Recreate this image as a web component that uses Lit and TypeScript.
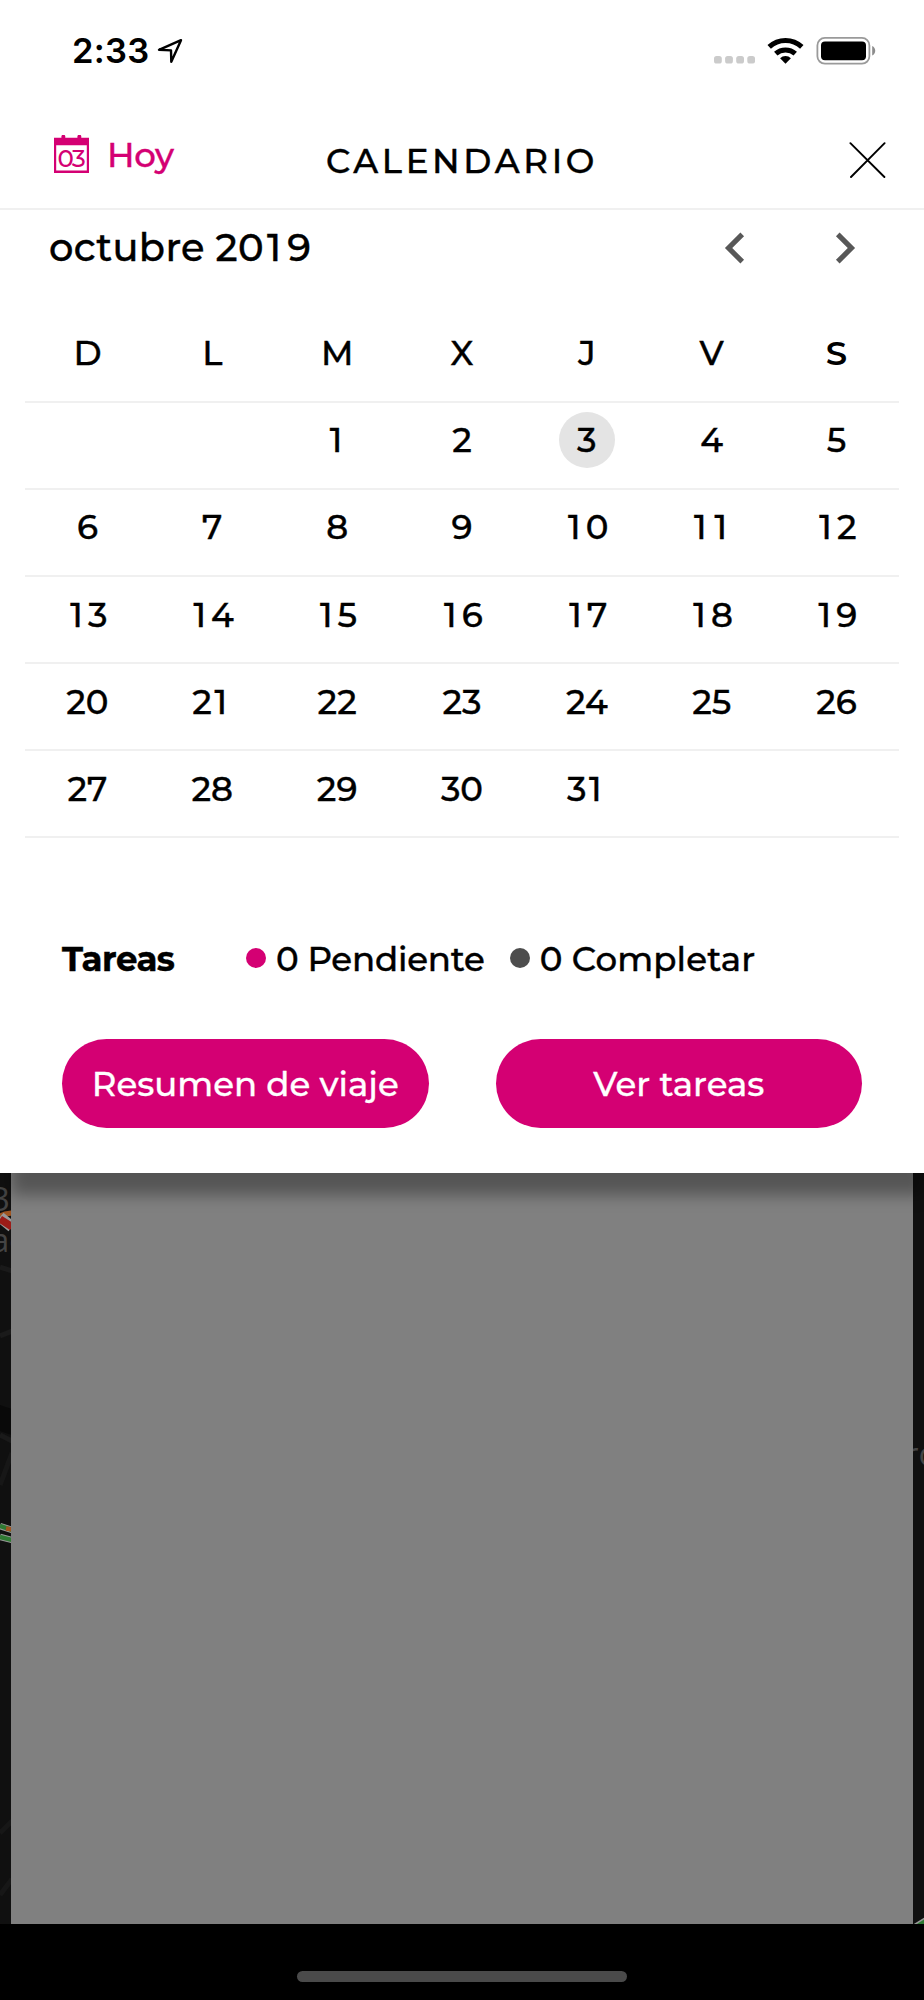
import { LitElement, html, svg, css } from "lit";
import { customElement, property } from "lit/decorators.js";
import { classMap } from "lit/directives/class-map.js";

// The figure 1 is narrow in the proportional set, so it gets side bearings of its own.
const figures = (text: string) => Array.from(text).map((c) => (c === "1" ? html`<span class="one">1</span>` : c));

@customElement("status-bar")
class StatusBar extends LitElement {
  static styles = css`
    :host {
      display: flex;
      align-items: center;
      justify-content: space-between;
      height: 101px;
      padding: 0 48px 0 72px;
      font: 600 34.5px/40px Inter, "Liberation Sans", sans-serif;
      color: #000;
    }
    .side { display: flex; align-items: center; }
    .time { letter-spacing: 0.3px; }
    .arrow { margin-left: 7px; }
    .signal { margin: 18px 12px 0 0; }
    .wifi { margin-right: 12px; }
    svg { display: block; }
  `;
  render() {
    return html`
      <div class="side">
        <span class="time">2:33</span>
        <svg class="arrow" width="26" height="26" viewBox="0 0 26 26" fill="none" stroke="#000" stroke-width="2.4" stroke-linejoin="round">
          <path d="M24 2.2 2 11.8l12 .6.3 11.4z" />
        </svg>
      </div>
      <div class="side">
        <svg class="signal" width="41" height="8" viewBox="0 0 41 8" fill="#cbcbcb">
          ${[0, 11.1, 22.2, 33.3].map((x) => svg`<rect x=${x} y="0" width="7.8" height="7.6" rx="2.6" />`)}
        </svg>
        <svg class="wifi" width="37" height="27" viewBox="0 0 37 27">
          <path d="M18.5 26.8 13.1 21.3a7.7 7.7 0 0 1 10.8 0z" />
          <path d="M8.75 16.7a14.5 14.5 0 0 1 19.5 0" fill="none" stroke="#000" stroke-width="5" />
          <path d="M2.2 9.9a23.8 23.8 0 0 1 32.6 0" fill="none" stroke="#000" stroke-width="5" />
        </svg>
        <svg width="60" height="28" viewBox="0 0 60 28">
          <rect x="1.4" y="0.9" width="52" height="25.8" rx="7.5" fill="none" stroke="#9a9a9a" stroke-width="1.8" />
          <rect x="5" y="4.4" width="45" height="18.8" rx="4" />
          <path d="M56.2 9.1c4 1.6 4 7.8 0 9.4z" fill="#8c8c8c" />
        </svg>
      </div>
    `;
  }
}

@customElement("title-bar")
class TitleBar extends LitElement {
  static styles = css`
    :host {
      display: grid;
      grid-template-columns: 272px 1fr 272px;
      align-items: center;
      height: 107px;
      border-bottom: 2px solid #f0f0f0;
      font-size: 34px;
      line-height: 42px;
      font-weight: 500;
    }
    .today { display: flex; align-items: center; padding-left: 53px; color: #d40073; }
    .today span { margin-left: 17px; letter-spacing: -0.3px; }
    .icon-text { font-size: 24.5px; font-weight: 500; letter-spacing: -1.9px; stroke: none; }
    .title { padding: 13px 0 0; text-align: center; letter-spacing: 3.65px; white-space: nowrap; }
    .close { justify-self: end; margin: 12px 38px 0 0; }
    svg { display: block; }
  `;
  render() {
    return html`
      <div class="today">
        <svg width="37" height="39" viewBox="0 0 37 39" fill="currentColor">
          <path d="M1 2.8H8.4V1.6a1.6 1.6 0 0 1 3.9 0V2.8H24.4V1.6a1.6 1.6 0 0 1 3.9 0V2.8H36V38H1zM3.2 10.3V35.5H33.8V10.3z" fill-rule="evenodd" />
          <text class="icon-text" x="17.6" y="32" text-anchor="middle">03</text>
        </svg>
        <span>Hoy</span>
      </div>
      <div class="title">CALENDARIO</div>
      <svg class="close" width="37" height="37" viewBox="0 0 37 37" fill="none" stroke="#000" stroke-width="1.9" stroke-linecap="round">
        <path d="M1.4 1.2 35.4 35M35.6 1.2 2 35" />
      </svg>
    `;
  }
}

@customElement("month-grid")
class MonthGrid extends LitElement {
  static styles = css`
    :host { display: block; }
    .head {
      display: flex;
      align-items: center;
      height: 75px;
      padding: 0 48px 0 49px;
      font-size: 38.4px;
      font-weight: 500;
      letter-spacing: 0.35px;
    }
    .month { flex: 1; }
    .next { margin-left: 48px; }
    .week {
      display: grid;
      grid-template-columns: repeat(7, 1fr);
      align-items: center;
      justify-items: center;
      box-sizing: border-box;
      height: 87.1px;
      margin: 0 25px;
      padding-bottom: 10px;
      border-bottom: 2px solid #f0f0f0;
      font-size: 34px;
      font-weight: 500;
    }
    .names { height: 117.8px; padding: 20px 0 0; }
    .one { padding: 0 0.15em 0 0.08em; }
    .day {
      display: flex;
      align-items: center;
      justify-content: center;
      width: 56px;
      height: 56px;
      border-radius: 50%;
    }
    .today { background: #e4e4e4; }
    .strong { font-weight: 600; -webkit-text-stroke: 0; }
    svg { display: block; }
  `;
  @property({ type: Number }) offset = 2;
  @property({ type: Number }) days = 31;
  @property({ type: Number }) today = 3;

  render() {
    const weeks = Array.from({ length: 5 }, (_, w) =>
      Array.from({ length: 7 }, (_, d) => w * 7 + d + 1 - this.offset));
    return html`
      <div class="head">
        <span class="month">${figures("octubre 2019")}</span>
        <svg width="62" height="62" viewBox="0 0 24 24" fill="#585858"><path d="M15.5 7.41 14.1 6l-6 6 6 6 1.4-1.41L10.93 12z" /></svg>
        <svg class="next" width="62" height="62" viewBox="0 0 24 24" fill="#585858"><path d="M8.5 7.41 9.9 6l6 6-6 6-1.4-1.41L13.07 12z" /></svg>
      </div>
      <div class="week names">
        ${["D", "L", "M", "X", "J", "V", "S"].map((n) => html`<span class=${classMap({ strong: n === "S" })}>${n}</span>`)}
      </div>
      ${weeks.map((week) => html`
        <div class="week">
          ${week.map((n) => html`<span class=${classMap({ day: true, today: n === this.today })}>${n > 0 && n <= this.days ? figures(String(n)) : ""}</span>`)}
        </div>`)}
    `;
  }
}

@customElement("task-summary")
class TaskSummary extends LitElement {
  static styles = css`
    :host { display: block; padding: 0 62px 44px; font-size: 34px; line-height: 42px; font-weight: 500; }
    .tasks { display: flex; align-items: center; height: 42px; margin: 100px 0 59px; letter-spacing: -0.2px; }
    .label { width: 184px; font-weight: 700; letter-spacing: -0.5px; }
    .dot { width: 20px; height: 20px; margin: 0 10px 3px 0; border-radius: 50%; background: #d40073; }
    .done { margin-left: 25px; background: #4d4d4d; }
    .completed { letter-spacing: 0.15px; }
    .actions { display: grid; grid-template-columns: 1fr 1fr; gap: 67px; }
    button {
      height: 89px;
      padding: 1px 0 0;
      border: 0;
      border-radius: 45px;
      background: #d40073;
      color: #fff;
      font: inherit;
      -webkit-text-stroke: 0.3px #fff;
    }
  `;
  render() {
    return html`
      <div class="tasks">
        <span class="label">Tareas</span>
        <i class="dot"></i><span>0 Pendiente</span>
        <i class="dot done"></i><span class="completed">0 Completar</span>
      </div>
      <div class="actions">
        <button>Resumen de viaje</button>
        <button>Ver tareas</button>
      </div>
    `;
  }
}

@customElement("app-root")
class AppRoot extends LitElement {
  static styles = css`
    :host {
      display: flex;
      flex-direction: column;
      height: 2000px;
      overflow: hidden;
      background: #000;
      color: #000;
      font-family: Montserrat, Inter, "Liberation Sans", sans-serif;
      font-weight: 500;
    }
    .panel {
      position: relative;
      z-index: 1;
      height: 1172.5px;
      background: #fff;
      box-shadow: 6px 27px 15px -5px rgba(0, 0, 0, 0.34);
      -webkit-text-stroke: 0.4px currentColor;
    }
    status-bar { -webkit-text-stroke: 0; }
    .backdrop { display: grid; grid-template-columns: 11px 1fr 11px; height: 751.5px; background: #101010; }
    .sheet { background: #808080; }
    .map { display: block; width: 100%; height: 751.5px; overflow: hidden; }
    .label { font: 33px "Open Sans", sans-serif; fill: #444; }
    .home { width: 330px; height: 11px; margin: 47px auto 0; border-radius: 6px; background: #4a4a4a; }
  `;
  render() {
    return html`
      <div class="panel">
        <status-bar></status-bar>
        <title-bar></title-bar>
        <month-grid></month-grid>
        <task-summary></task-summary>
      </div>
      <div class="backdrop">
        <svg class="map">
          <path d="M0 94 12 98M0 163 12 158M0 262 12 268" stroke="#1a1a1a" stroke-width="5" />
          <path d="M0 312 12 280M0 660 12 648M0 722 12 706" stroke="#171717" stroke-width="5" />
          <path d="M0 232 12 236V262L0 258z" fill="#090909" />
          <path d="M0 43 5 41 12 40" fill="none" stroke="#a05520" stroke-width="5" />
          <path d="M0 44 12 54" stroke="#999" stroke-width="11" />
          <path d="M0 46 12 54" stroke="#9c1c18" stroke-width="7.5" />
          <path d="M0 353 12 357M0 364 12 367" stroke="#999" stroke-width="6.5" />
          <path d="M0 353 12 357M0 364 12 367" stroke="#2f7a33" stroke-width="4.5" />
          <path d="M6 355.5 12 356.5" stroke="#a05520" stroke-width="4.5" />
          <text class="label" x="-9" y="38">3</text>
          <text class="label" x="-9" y="79">ac</text>
        </svg>
        <div class="sheet"></div>
        <svg class="map">
          <text class="label" x="-8" y="293">ro</text>
          <path d="M0 751.5 12 744V751.5z" fill="#999" />
          <path d="M3 751.5 12 746V751.5z" fill="#2f7a33" />
        </svg>
      </div>
      <div class="home"></div>
    `;
  }
}
